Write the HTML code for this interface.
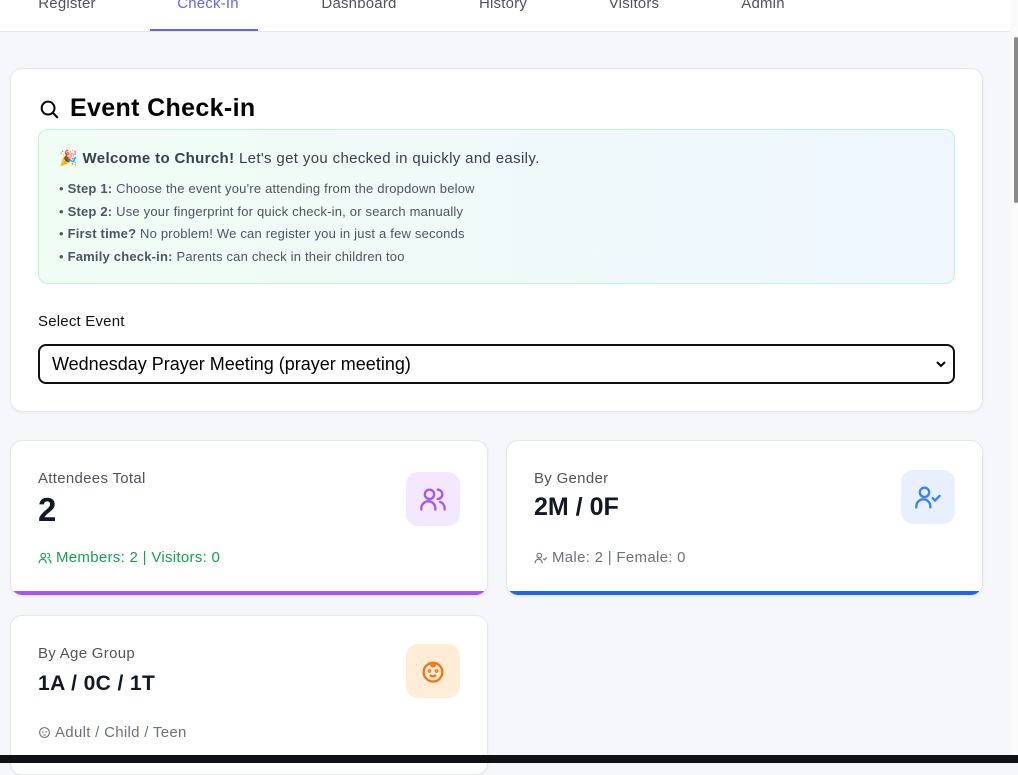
<!DOCTYPE html>
<html><head><meta charset="utf-8"><style>
*{box-sizing:border-box;margin:0;padding:0}
body{width:1018px;height:763px;overflow:hidden;font-family:"Liberation Sans",sans-serif;background:#f5f7fa;position:relative}
.nav{position:absolute;left:0;top:0;width:1010px;height:32px;background:#fff;border-bottom:1px solid #e5e7eb}
.nav span{position:absolute;top:-5px;font-size:15px;color:#4b5563;transform:translateX(-50%);letter-spacing:.2px}
.ul{position:absolute;left:150px;top:29px;width:108px;height:2px;background:#6366f1}
.card{position:absolute;background:#fff;border:1px solid #e5e7eb;border-radius:12px;box-shadow:0 1px 3px rgba(0,0,0,.05);overflow:hidden}
.h1{position:absolute;left:38px;top:94px;font-size:25px;font-weight:bold;color:#000;display:flex;align-items:center;gap:10px;letter-spacing:.35px}
.info{position:absolute;left:38px;top:129px;width:917px;height:155px;border:1px solid #bbf7d0;border-radius:10px;background:linear-gradient(90deg,#f0fdf4,#eff6ff)}
.info .t{position:absolute;left:20px;top:19px;font-size:15px;color:#374151;letter-spacing:.35px}
.info ul{position:absolute;left:20px;top:48px;list-style:none;font-size:13px;color:#4b5563;line-height:22.5px;letter-spacing:.2px}
.lbl{position:absolute;left:38px;top:313px;font-size:15px;color:#111;letter-spacing:.2px}
.sel{position:absolute;left:38px;top:344px;width:917px;height:40px;border:2px solid #111;border-radius:8px;font-size:18px;color:#000;padding:8px 12px}
.st .l{position:absolute;left:27px;top:29px;font-size:15px;color:#4b5563;letter-spacing:.3px}
.st .v{position:absolute;left:27px;top:52px;font-size:25px;font-weight:bold;color:#111827}
.st .s{position:absolute;left:27px;top:108px;font-size:15px;color:#6b7280;display:flex;align-items:center;gap:4px;letter-spacing:.3px}
.st .ic{position:absolute;left:395px;top:31px;width:54px;height:54px;border-radius:12px;display:flex;align-items:center;justify-content:center}
.bar{position:absolute;left:0;bottom:0;width:100%;height:4px}
</style></head><body>
<div class="nav">
<span style="left:67px">Register</span><span style="left:208px;color:#6366f1">Check-In</span><span style="left:359px">Dashboard</span><span style="left:503px">History</span><span style="left:634px">Visitors</span><span style="left:763px">Admin</span>
<div class="ul"></div></div>
<div class="card" style="left:10px;top:68px;width:973px;height:344px"></div>
<div class="h1"><svg width="22" height="22" viewBox="0 0 24 24" fill="none" stroke="#000" stroke-width="2.2" stroke-linecap="round"><circle cx="11" cy="11" r="7"/><path d="M21 21l-4.5-4.5"/></svg>Event Check-in</div>
<div class="info"><div class="t">🎉 <b>Welcome to Church!</b> Let's get you checked in quickly and easily.</div>
<ul><li>• <b>Step 1:</b> Choose the event you're attending from the dropdown below</li><li>• <b>Step 2:</b> Use your fingerprint for quick check-in, or search manually</li><li>• <b>First time?</b> No problem! We can register you in just a few seconds</li><li>• <b>Family check-in:</b> Parents can check in their children too</li></ul></div>
<div class="lbl">Select Event</div>
<div class="sel">Wednesday Prayer Meeting (prayer meeting)<svg style="position:absolute;right:6px;top:13px" width="12" height="10" viewBox="0 0 12 10" fill="none" stroke="#000" stroke-width="2"><path d="M2 3l4 4 4-4"/></svg></div>

<div class="card st" style="left:10px;top:440px;width:478px;height:156px">
<div class="l">Attendees Total</div><div class="v" style="font-size:33px;top:50px">2</div>
<div class="s" style="color:#16a34a"><svg width="14" height="14" viewBox="0 0 24 24" fill="none" stroke="#16a34a" stroke-width="2"><circle cx="9" cy="8" r="4"/><path d="M2 21v-1a6 6 0 0 1 12 0v1M16 4a4 4 0 0 1 0 8M22 21v-1a6 6 0 0 0-4-5.6"/></svg>Members: 2 | Visitors: 0</div>
<div class="ic" style="background:#f3e8ff"><svg width="28" height="28" viewBox="0 0 24 24" fill="none" stroke="#a855f7" stroke-width="2" stroke-linecap="round"><circle cx="9" cy="8" r="4"/><path d="M2 21v-1a6 6 0 0 1 12 0v1M16 4a4 4 0 0 1 0 8M22 21v-1a6 6 0 0 0-4-5.6"/></svg></div>
<div class="bar" style="background:#a855f7"></div></div>

<div class="card st" style="left:506px;top:440px;width:477px;height:156px">
<div class="l">By Gender</div><div class="v">2M / 0F</div>
<div class="s"><svg width="14" height="14" viewBox="0 0 24 24" fill="none" stroke="#6b7280" stroke-width="2"><circle cx="9" cy="8" r="4"/><path d="M2 21v-1a6 6 0 0 1 12 0v1M16 13l2 2 4-4"/></svg>Male: 2 | Female: 0</div>
<div class="ic" style="background:#e8f0fe;left:394px;top:29px"><svg width="28" height="28" viewBox="0 0 24 24" fill="none" stroke="#3b82f6" stroke-width="2" stroke-linecap="round"><circle cx="9" cy="8" r="4"/><path d="M2 21v-1a6 6 0 0 1 12 0v1M16 13l2 2 4-4"/></svg></div>
<div class="bar" style="background:#2563eb"></div></div>

<div class="card st" style="left:10px;top:615px;width:478px;height:160px">
<div class="l">By Age Group</div><div class="v" style="font-size:21px;top:56px;letter-spacing:.4px">1A / 0C / 1T</div>
<div class="s"><svg width="13" height="13" viewBox="0 0 24 24" fill="none" stroke="#6b7280" stroke-width="2"><circle cx="12" cy="12" r="9"/><circle cx="9" cy="11" r=".5"/><circle cx="15" cy="11" r=".5"/><path d="M10 16c1 .7 3 .7 4 0"/></svg>Adult / Child / Teen</div>
<div class="ic" style="background:#ffedd5;top:28px"><svg width="28" height="28" viewBox="0 0 24 24" fill="none" stroke="#f97316" stroke-width="2" stroke-linecap="round"><circle cx="12" cy="13" r="8"/><path d="M12 5c-2 0-2 3 0 3s1.5-2 .5-2"/><circle cx="9" cy="12" r=".6"/><circle cx="15" cy="12" r=".6"/><path d="M10 16c1 .8 3 .8 4 0"/></svg></div></div>

<div style="position:absolute;left:1010px;top:0;width:8px;height:755px;background:#fafafa"></div>
<div style="position:absolute;left:1014px;top:37px;width:4px;height:166px;background:#8a8a8a;border-radius:2px"></div>
<div style="position:absolute;left:0;top:755px;width:1018px;height:8px;background:#101114"></div>
</body></html>
